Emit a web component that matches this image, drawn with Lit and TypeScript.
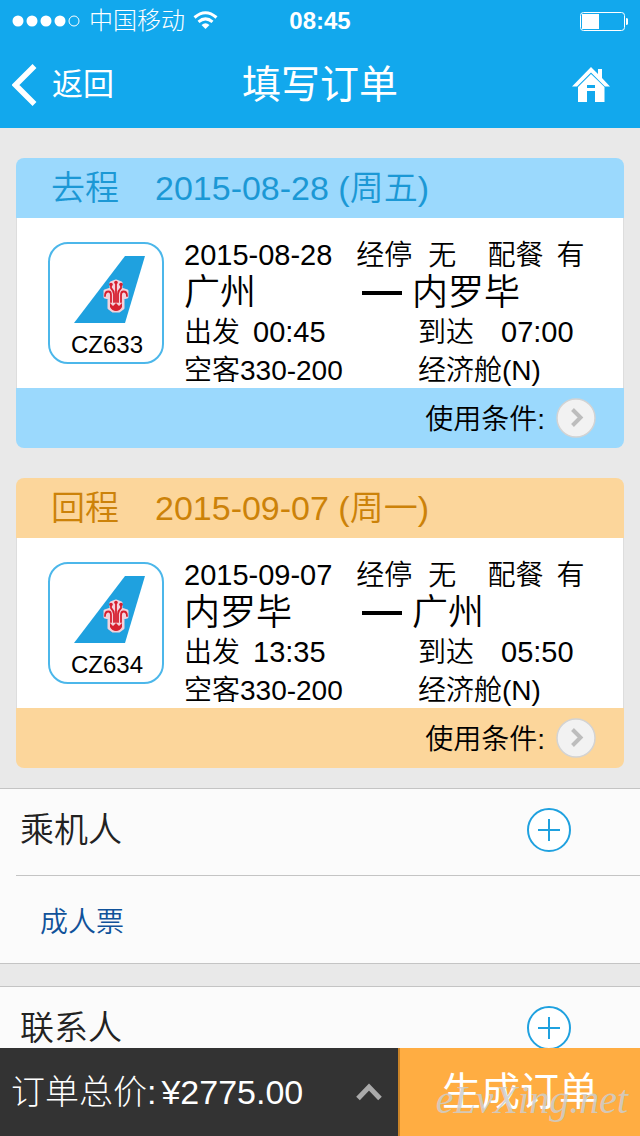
import { LitElement, html, css, svg } from "lit";
import { customElement, property, state } from "lit/decorators.js";

interface Flight {
  kind: "outbound" | "inbound";
  label: string;
  date: string;
  weekday: string;
  code: string;
  from: string;
  to: string;
  stops: string;
  meal: string;
  departs: string;
  arrives: string;
  aircraft: string;
  cabin: string;
}

const FLIGHTS: Flight[] = [
  {
    kind: "outbound", label: "去程", date: "2015-08-28", weekday: "周五", code: "CZ633",
    from: "广州", to: "内罗毕", stops: "无", meal: "有", departs: "00:45", arrives: "07:00",
    aircraft: "空客330-200", cabin: "经济舱(N)",
  },
  {
    kind: "inbound", label: "回程", date: "2015-09-07", weekday: "周一", code: "CZ634",
    from: "内罗毕", to: "广州", stops: "无", meal: "有", departs: "13:35", arrives: "05:50",
    aircraft: "空客330-200", cabin: "经济舱(N)",
  },
];

const base = css`
  * { box-sizing: border-box; }
  h1, h2, p { margin: 0; font-weight: inherit; }
  button {
    margin: 0; padding: 0; border: 0; background: none;
    font: inherit; color: inherit; cursor: pointer;
  }
  a { color: inherit; text-decoration: none; }
  svg { display: block; flex: none; }
`;

const tailLogo = svg`
  <path d="M51 0H71L51 67H0Z" fill="#1fa1df"/>
  <path d="M42 25 47 27V33L53 35V41L49 42V52L45 55H39L35 52V42L31 41V35L37 33V27Z"
    fill="#f3d3dc" stroke="#f3d3dc" stroke-width="3" stroke-linejoin="round"/>
  <g stroke="#d6202f" stroke-width="1.800" fill="none" stroke-linecap="round">
    <path d="M42 27V46M37 29V32Q40 35 40 38V46M47 29V32Q44 35 44 38V46"/>
    <path d="M31 40Q31 35.500 34.500 35.500Q37 35.500 37 39V46M53 40Q53 35.500 49.500 35.500Q47 35.500 47 39V46"/>
  </g>
  <path d="M36 47 39 50 42 47 45 50 48 47V51Q46 55 42 55Q38 55 36 51Z" fill="#d6202f"/>
  <g fill="#d6202f"><circle cx="42" cy="26.500" r="1.800"/><circle cx="37" cy="28.500" r="1.800"/><circle cx="47" cy="28.500" r="1.800"/></g>
`;

@customElement("flight-card")
export class FlightCard extends LitElement {
  @property({ attribute: false }) flight!: Flight;

  static styles = [base, css`
    :host { display: block; }
    .card { border-radius: 8px; overflow: hidden; color: #000; font-weight: 350; }
    .outbound { --tint: #9bd9fd; --ink: #1b98d5; }
    .inbound { --tint: #fcd69b; --ink: #cc8209; }
    .head, .foot { display: flex; align-items: center; height: 60px; background: var(--tint); }
    .head { gap: 36px; padding: 0 35px; color: var(--ink); font-size: 34px; line-height: 60px; }
    .foot { justify-content: flex-end; padding: 0 28px; }
    .terms { display: flex; align-items: center; gap: 11px; font-size: 28px; line-height: 40px; }
    .terms-text { padding-top: 3px; }
    .body {
      display: flex; gap: 20px; padding: 19px 8px 0 31px;
      background: #fff; border: solid #ddd; border-width: 0 1px;
    }
    .airline {
      display: flex; flex-direction: column; align-items: center;
      width: 116px; height: 122px; margin-top: 5px; padding: 12px 0 0 2px;
      border: 2px solid #4cb7ea; border-radius: 20px; background: #fff;
    }
    .tail { margin-left: 4px; }
    .code { font-size: 24px; line-height: 44px; }
    .info {
      flex: 1; display: grid; grid-template-columns: 228px 1fr;
      grid-template-rows: 37px 37px 42px 35px; align-items: center;
      font-size: 28px; line-height: 36px; white-space: nowrap;
    }
    .num { font-size: 29px; }
    .meta { grid-column: 1 / -1; display: flex; align-items: baseline; }
    .stops, .meal { display: flex; }
    .stops { gap: 16px; margin-left: 24px; }
    .meal { gap: 13px; margin-left: 31px; }
    .city { font-size: 36px; line-height: 40px; }
    .origin { display: flex; align-items: center; justify-content: space-between; padding-right: 10px; }
    .dash { width: 40px; height: 4px; background: #000; }
    .time { display: flex; align-items: baseline; gap: 13px; }
    .arrive { gap: 27px; }
    .right { padding-left: 6px; }
  `];

  render() {
    const f = this.flight;
    return html`
      <article class="card ${f.kind}">
        <h2 class="head">
          <span>${f.label}</span>
          <span>${f.date} (${f.weekday})</span>
        </h2>
        <div class="body">
          <div class="airline">
            <svg class="tail" width="71" height="67" viewBox="0 0 71 67" aria-hidden="true">${tailLogo}</svg>
            <span class="code">${f.code}</span>
          </div>
          <div class="info">
            <div class="meta">
              <span class="num">${f.date}</span>
              <span class="stops"><span>经停</span><span>${f.stops}</span></span>
              <span class="meal"><span>配餐</span><span>${f.meal}</span></span>
            </div>
            <div class="origin"><span class="city">${f.from}</span><span class="dash"></span></div>
            <div class="city">${f.to}</div>
            <div class="time"><span>出发</span><span class="num">${f.departs}</span></div>
            <div class="time arrive right"><span>到达</span><span class="num">${f.arrives}</span></div>
            <div>${f.aircraft}</div>
            <div class="right">${f.cabin}</div>
          </div>
        </div>
        <div class="foot">
          <button class="terms" type="button">
            <span class="terms-text">使用条件:</span>
            <svg width="40" height="40" viewBox="0 0 40 40" aria-hidden="true">
              <circle cx="20" cy="20" r="19" fill="#f2f2f2" stroke="#d3d3d3" stroke-width="1.500"/>
              <path d="M16.500 11.500 24.500 19.500 16.500 27.500" fill="none" stroke="#bdbdbd" stroke-width="4"/>
            </svg>
          </button>
        </div>
      </article>
    `;
  }
}

@customElement("app-root")
export class AppRoot extends LitElement {
  @state() private flights = FLIGHTS;

  static styles = [base, css`
    :host {
      display: flex; flex-direction: column; height: 100vh; overflow: hidden;
      background: #e9e9e9; color: #222;
      font-family: "Liberation Sans", "Noto Sans CJK SC", sans-serif;
    }
    .top { flex: none; background: #12a8ed; color: #fff; }
    .status, .nav { display: grid; grid-template-columns: 1fr auto 1fr; align-items: center; }
    .status { height: 41px; padding: 0 12px; font-size: 24px; line-height: 40px; }
    .carrier { display: flex; align-items: center; gap: 8px; font-weight: 300; }
    .clock { font-weight: 700; }
    .battery, .home { justify-self: end; }
    .nav { height: 87px; padding: 0 12px; }
    .home { padding-right: 18px; }
    .back { display: flex; align-items: center; gap: 15px; justify-self: start; font-size: 31px; line-height: 40px; }
    .title { font-size: 39px; line-height: 56px; }
    .content { flex: 1; min-height: 0; overflow-y: auto; scrollbar-width: none; }
    .flights { display: flex; flex-direction: column; gap: 30px; padding: 30px 16px 20px; }
    .panel { border: solid #c4c4c4; border-width: 1px 0; background: #fbfbfb; margin-bottom: 22px; }
    .row {
      display: flex; align-items: center; justify-content: space-between;
      height: 86px; padding: 0 69px 4px 20px;
    }
    .name { font-size: 34px; line-height: 48px; font-weight: 350; }
    .ticket {
      display: flex; align-items: center; height: 88px; margin-left: 16px; padding-left: 24px;
      border-top: 1px solid #c4c4c4; color: #10529a; font-size: 28px; font-weight: 350;
    }
    .bar {
      position: relative; flex: none; display: grid; grid-template-columns: 398fr 242fr;
      height: 88px; color: #fff;
    }
    .total {
      display: flex; align-items: center; justify-content: space-between;
      padding: 0 16px 0 11px; background: #333; font-size: 34px; line-height: 48px;
      font-weight: 300; white-space: nowrap;
    }
    .price { margin-left: 5px; }
    .submit {
      border-left: 2px solid #cc8427; background: #ffad42;
      font-size: 39px; line-height: 48px;
    }
    .mark {
      position: absolute; right: 12px; bottom: 12px; pointer-events: none;
      font: italic 40px/48px "Liberation Serif", serif; color: rgba(205, 205, 205, 0.85);
    }
  `];

  private plus(label: string) {
    return html`
      <button type="button" aria-label=${label}>
        <svg width="44" height="44" viewBox="0 0 44 44" fill="none" stroke="#1fa1df" stroke-width="2">
          <circle cx="22" cy="22" r="21" fill="#fff"/>
          <path d="M22 11V33M11 22H33"/>
        </svg>
      </button>`;
  }

  render() {
    return html`
      <header class="top">
        <div class="status">
          <div class="carrier">
            <svg width="69" height="12" viewBox="0 0 69 12" fill="#fff">
              <circle cx="6" cy="6" r="5.500"/><circle cx="20" cy="6" r="5.500"/>
              <circle cx="34" cy="6" r="5.500"/><circle cx="48" cy="6" r="5.500"/>
              <circle cx="62" cy="6" r="5" fill="none" stroke="#fff"/>
            </svg>
            <span>中国移动</span>
            <svg width="25" height="19" viewBox="0 0 25 19" fill="none" stroke="#fff" stroke-width="3">
              <path d="M1.500 6.500Q12.500 -3 23.500 6.500M5.500 10.800Q12.500 5 19.500 10.800"/>
              <path d="M8.500 14Q12.500 10.500 16.500 14L12.500 18Z" fill="#fff" stroke="none"/>
            </svg>
          </div>
          <span class="clock">08:45</span>
          <svg class="battery" width="48" height="20" viewBox="0 0 48 20">
            <rect x="0.500" y="1.500" width="44" height="18" rx="3" fill="none" stroke="#fff"/>
            <rect x="2" y="3" width="17" height="15" fill="#fff"/>
            <path d="M46 7Q49 7 49 10.500T46 14Z" fill="#fff"/>
          </svg>
        </div>
        <nav class="nav">
          <a class="back" href="#back">
            <svg width="25" height="42" viewBox="0 0 25 42">
              <path d="M22.500 2 3.500 21 22.500 40" fill="none" stroke="#fff" stroke-width="5.500"/>
            </svg>
            <span>返回</span>
          </a>
          <h1 class="title">填写订单</h1>
          <a class="home" href="#home" aria-label="首页">
            <svg width="38" height="35" viewBox="0 0 38 35" fill="#fff">
              <path d="M0 19.500 19 0 26 7V2H30V11L38 19.500H33L19 5.500 5 19.500Z"/>
              <path d="M6 20 19 7 32.500 20V35H23V24H15V35H6ZM15 18V21H23V18Z" fill-rule="evenodd"/>
            </svg>
          </a>
        </nav>
      </header>

      <main class="content">
        <section class="flights">
          ${this.flights.map((f) => html`<flight-card .flight=${f}></flight-card>`)}
        </section>
        <section class="panel">
          <div class="row"><h2 class="name">乘机人</h2>${this.plus("添加乘机人")}</div>
          <p class="ticket">成人票</p>
        </section>
        <section class="panel">
          <div class="row"><h2 class="name">联系人</h2>${this.plus("添加联系人")}</div>
        </section>
      </main>

      <footer class="bar">
        <button class="total" type="button">
          <span>订单总价:<span class="price">¥2775.00</span></span>
          <svg width="26" height="18" viewBox="0 0 26 18">
            <path d="M2 15.500 13 4 24 15.500" fill="none" stroke="#aaa" stroke-width="5"/>
          </svg>
        </button>
        <button class="submit" type="button">生成订单</button>
        <span class="mark">eLvXing.net</span>
      </footer>
    `;
  }
}
